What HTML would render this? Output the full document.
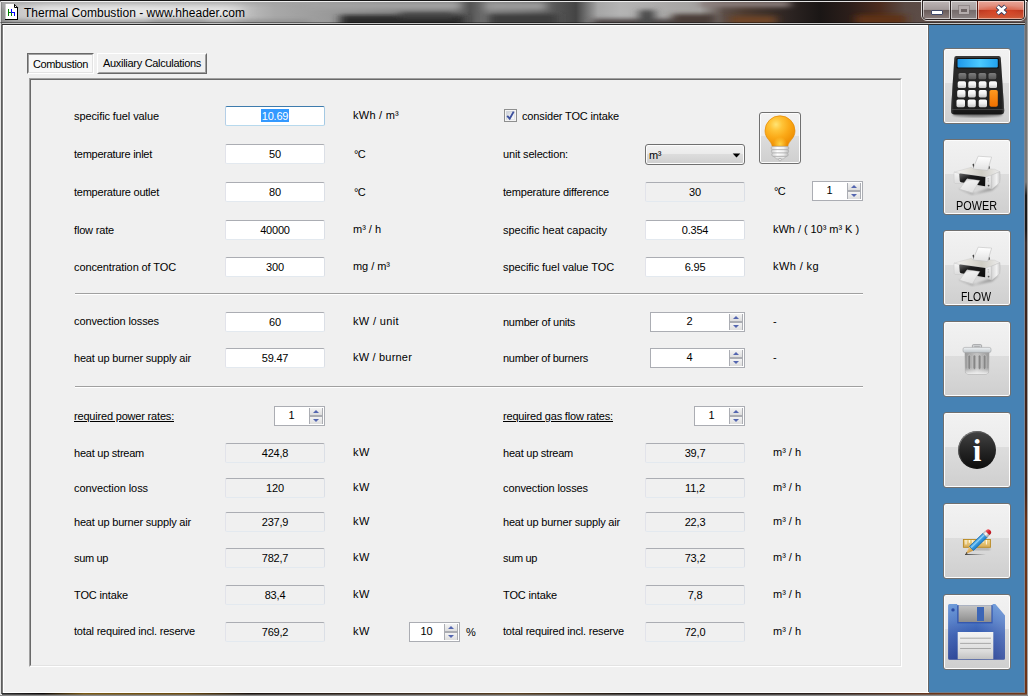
<!DOCTYPE html><html><head><meta charset="utf-8"><title>Thermal Combustion - www.hheader.com</title><style>
html,body{margin:0;padding:0}
body{width:1028px;height:696px;overflow:hidden;position:relative;background:#f0f0f0;font-family:"Liberation Sans",Arial,sans-serif;font-size:11px;color:#000}
div,span,i{box-sizing:border-box}
.a{position:absolute}
.t{position:absolute;white-space:nowrap;line-height:13px;height:13px;font-size:11px;color:#000}
#title{position:absolute;left:0;top:0;width:1028px;height:25px;overflow:hidden;background:#8a8a8a}
#client{position:absolute;left:3px;top:25px;width:1021px;height:667px;background:#f0f0f0}
#side{position:absolute;left:928px;top:25px;width:96px;height:667px;background:#4682b4}
.tb{position:absolute;background:#fff;border:1px solid #e3e9ef;border-top-color:#abadb3;border-left-color:#e2e3ea;border-right-color:#dbdfe6;border-radius:2px}
.tb.ro{background:#f0f0f0}
.tb.fo{border-color:#b7d9ed;border-top-color:#3d7bad;border-left-color:#b5cfe7;border-right-color:#a4c9e3}
.tv{position:absolute;left:0;right:0;top:3px;height:13px;line-height:13px;text-align:center;font-size:11px;white-space:nowrap;letter-spacing:-0.2px}
.sel{background:#3399ff;color:#fff;display:inline-block;height:13px;line-height:15px;margin-top:-1px;padding:0 1px;vertical-align:top}
.nud{position:absolute;background:#fff;border:1px solid #abadb3}
.nv{position:absolute;left:0;top:2px;height:13px;line-height:13px;text-align:center;font-size:11px}
.sp{position:absolute;right:1px;top:1px;width:14px;height:16px;border-left:1px solid #abadb3;border-right:1px solid #abadb3;background:#abadb3}
.su,.sd{position:absolute;left:0;width:12px;height:7px;background:linear-gradient(#f4f4f4,#dedede)}
.su{top:0}.sd{top:9px}
.su i,.sd i{position:absolute;left:3px;width:0;height:0;border-left:3px solid transparent;border-right:3px solid transparent}
.su i{top:2px;border-bottom:3px solid #5466b0}
.sd i{top:2px;border-top:3px solid #5466b0}
.btn{position:absolute;border:1px solid #707070;border-radius:3px;background:linear-gradient(#f2f2f2 0,#ebebeb 46%,#dddddd 46%,#cfcfcf 100%);box-shadow:inset 0 0 0 1px #fcfcfc}
.hr{position:absolute;height:2px;border-top:1px solid #a0a0a0;border-bottom:1px solid #fff}
</style></head><body>
<div id="title">
<svg class="a" style="left:0;top:0" width="1028" height="25" viewBox="0 0 1028 25">
<defs>
<filter id="bl" x="-10%" y="-100%" width="120%" height="300%"><feGaussianBlur stdDeviation="5 2.2"/></filter>
<filter id="bl2" x="-10%" y="-100%" width="120%" height="300%"><feGaussianBlur stdDeviation="9 4"/></filter>
<linearGradient id="tbase" x1="0" x2="1028" y1="0" y2="0" gradientUnits="userSpaceOnUse">
<stop offset="0.0000" stop-color="#a0a0a0"/><stop offset="0.0136" stop-color="#c8c8c8"/><stop offset="0.1265" stop-color="#d0d0d0"/><stop offset="0.2335" stop-color="#c0c0c0"/><stop offset="0.2675" stop-color="#a8a8a8"/><stop offset="0.3259" stop-color="#989898"/><stop offset="0.3891" stop-color="#848484"/><stop offset="0.4397" stop-color="#7c7c7c"/><stop offset="0.4572" stop-color="#545454"/><stop offset="0.4767" stop-color="#7c7c7c"/><stop offset="0.5058" stop-color="#707070"/><stop offset="0.5350" stop-color="#5c5c5c"/><stop offset="0.5603" stop-color="#444444"/><stop offset="0.5817" stop-color="#a6a6a6"/><stop offset="0.6031" stop-color="#b4b4b4"/><stop offset="0.6809" stop-color="#a4a2a0"/><stop offset="0.7043" stop-color="#5c4e48"/><stop offset="0.7247" stop-color="#4c3a30"/><stop offset="0.7685" stop-color="#2c2422"/><stop offset="0.7977" stop-color="#1a1615"/><stop offset="0.8268" stop-color="#2c1e1a"/><stop offset="0.8560" stop-color="#4c2c1e"/><stop offset="0.8804" stop-color="#5a4a44"/><stop offset="1.0000" stop-color="#6a5a58"/>
</linearGradient>
</defs>
<rect x="0" y="0" width="1028" height="25" fill="url(#tbase)"/>
<g filter="url(#bl)">
<rect x="340" y="15" width="125" height="12" fill="#2c2c2c"/>
<rect x="400" y="12" width="55" height="6" fill="#444"/>
<rect x="300" y="2" width="160" height="7" fill="#a2a2a2"/>
<rect x="488" y="14" width="70" height="12" fill="#3c3c3c"/>
<rect x="486" y="2" width="60" height="8" fill="#9a9a9a"/>
<rect x="592" y="19" width="120" height="8" fill="#484242"/>
<rect x="639" y="10" width="16" height="16" fill="#4a4848"/>
<rect x="672" y="14" width="44" height="10" fill="#4a3c38"/>
<rect x="150" y="18" width="56" height="8" fill="#909090"/>
<rect x="700" y="1" width="90" height="6" fill="#8a7e7c"/>
<rect x="730" y="16" width="46" height="9" fill="#6e4426"/>
<rect x="856" y="15" width="50" height="10" fill="#5e3018"/>
</g>
<g filter="url(#bl)"><rect x="-10" y="0" width="320" height="4" fill="#a2a2a2"/><rect x="-10" y="20" width="320" height="5" fill="#8e8e8e"/><rect x="-6" y="8" width="12" height="18" fill="#8a8a8a"/></g>
<g filter="url(#bl2)"><rect x="34" y="7" width="205" height="10" fill="#f2f2f2" opacity="0.9"/></g>
<rect x="0" y="0" width="1028" height="1" fill="#161616"/>
<rect x="1" y="1" width="1026" height="1" fill="#f4f4f4" opacity="0.92"/>
<rect x="0" y="2" width="1" height="23" fill="#fff" opacity="0.7"/>
<rect x="1" y="2" width="1" height="23" fill="#000" opacity="0.15"/>
<rect x="0" y="22" width="1028" height="1" fill="#000" opacity="0.35"/>
<rect x="2" y="23" width="1024" height="1" fill="#c4c4c4"/>
<rect x="2" y="24" width="1024" height="1" fill="#282828"/>
</svg>
<!-- app icon -->
<svg class="a" style="left:5px;top:4px" width="14" height="17" viewBox="0 0 14 17" shape-rendering="crispEdges">
<path d="M0.600 0H9.500L12 2.500V15H0.600Z" fill="#fff" shape-rendering="auto"/>
<rect x="12" y="3" width="1" height="13" fill="#000"/><rect x="0" y="15" width="13" height="1" fill="#000"/>
<path d="M9.500 0.300V3.500H12.500" fill="none" stroke="#000" stroke-width="1" shape-rendering="auto"/>
<path d="M9.300 0.200L12.800 3.700" fill="none" stroke="#000" stroke-width="0.900" shape-rendering="auto"/>
<rect x="3" y="5" width="1" height="7" fill="#008000"/><rect x="3" y="8" width="3" height="1" fill="#008000"/><rect x="6" y="9" width="1" height="3" fill="#008000"/>
<rect x="6" y="5" width="1" height="4" fill="#0000ff"/><rect x="6" y="8" width="4" height="1" fill="#0000ff"/><rect x="9" y="8" width="1" height="4" fill="#0000ff"/>
</svg>
<!-- caption buttons -->
<div class="a" style="left:921px;top:-1px;width:105px;height:22px;border:1px solid rgba(255,255,255,.8);border-radius:0 0 6px 6px"></div>
<div class="a" style="left:922px;top:0px;width:103px;height:20px;border:1px solid #2a2222;border-top:none;border-radius:0 0 5px 5px;overflow:hidden">
 <div class="a" style="left:0;top:1px;width:27px;height:18px;background:linear-gradient(#bdb5b5 0,#a39a9a 47%,#685a58 50%,#8c7e7c 100%);box-shadow:inset 0 0 0 1px rgba(255,255,255,.55)"></div>
 <div class="a" style="left:27px;top:1px;width:1px;height:18px;background:#2a2222"></div>
 <div class="a" style="left:28px;top:1px;width:26px;height:18px;background:linear-gradient(#bcb6b6 0,#a8a2a2 47%,#746a6a 50%,#8e8686 100%);box-shadow:inset 0 0 0 1px rgba(255,255,255,.55)"></div>
 <div class="a" style="left:54px;top:1px;width:1px;height:18px;background:#5a1810"></div>
 <div class="a" style="left:55px;top:1px;width:46px;height:18px;background:radial-gradient(ellipse 60% 40% at 50% 62%,rgba(226,78,44,.9),rgba(226,78,44,0) 100%),linear-gradient(#eaa698 0,#d97e6c 47%,#b4301a 50%,#d2623f 100%);box-shadow:inset 0 0 0 1px rgba(255,255,255,.45)"></div>
 <div class="a" style="left:8px;top:10px;width:12px;height:5px;background:#fff;border:1px solid #404868;border-radius:1px"></div>
 <div class="a" style="left:36px;top:6px;width:10px;height:8px;border:2px solid #b4acac;border-top-width:3px;background:#6e6464;box-shadow:0 0 0 1px rgba(120,110,110,.5)"></div>
 <svg class="a" style="left:72px;top:4px" width="13" height="12" viewBox="0 0 13 12"><path d="M2.300 2.200L10.700 9.800M10.700 2.200L2.300 9.800" stroke="#3a4060" stroke-width="4.600" fill="none"/><path d="M2.600 2.500L10.400 9.500M10.400 2.500L2.600 9.500" stroke="#fff" stroke-width="2.900" fill="none"/></svg>
</div>
</div>
<!-- window side/bottom frame -->
<div class="a" style="left:0;top:25px;width:1px;height:671px;background:#e4e4e4"></div>
<div class="a" style="left:1px;top:25px;width:1px;height:669px;background:#5e5e5e"></div>
<div class="a" style="left:2px;top:25px;width:1px;height:668px;background:#7c7c7c"></div>
<div id="client"></div>
<div class="a" style="left:3px;top:25px;width:925px;height:668px;border:1px solid #fff;border-right:none"></div>
<div class="a" style="left:927px;top:25px;width:1px;height:667px;background:#fff"></div>
<div class="a" style="left:928px;top:25px;width:1px;height:667px;background:#646464"></div>
<div class="a" style="left:929px;top:25px;width:95px;height:667px;background:#4682b4"></div>
<div class="a" style="left:1024px;top:25px;width:1px;height:668px;background:#77879a"></div>
<div class="a" style="left:1025px;top:20px;width:2px;height:675px;background:linear-gradient(#6e6e6e 0,#7a7a7a 24%,#1a1a1a 26%,#1a1818 31%,#3a2c2a 33%,#3c241c 42%,#42241a 70%,#683218 74%,#6e3418 100%)"></div>
<div class="a" style="left:1027px;top:2px;width:1px;height:694px;background:#a2a2a2"></div>
<div class="a" style="left:929px;top:692px;width:96px;height:1px;background:#6f7f92"></div>
<div class="a" style="left:2px;top:694px;width:1025px;height:1px;background:#868686"></div>
<div class="a" style="left:2px;top:694px;width:1025px;height:1px;opacity:.55;background:linear-gradient(90deg,#2c2c2c 0,#0c0808 4%,#7a5a14 8%,#6a4a10 18%,#1c1410 24%,#3a2c20 40%,#5a4020 50%,#181414 62%,#2a201c 80%,#70381a 92%,#70381a 100%)"></div>
<div class="a" style="left:2px;top:693px;width:1025px;height:1px;background:linear-gradient(90deg,#2c2c2c 0,#0c0808 4%,#7a5a14 8%,#6a4a10 18%,#1c1410 24%,#3a2c20 40%,#5a4020 50%,#181414 62%,#2a201c 80%,#70381a 92%,#70381a 100%)"></div>
<div class="a" style="left:0;top:695px;width:1028px;height:1px;background:#8c8c8c"></div>

<!-- tabs -->
<div class="a" style="left:27px;top:53px;width:67px;height:21px;border:1px solid #fff;border-top-color:#696969;border-left-color:#696969;background:#f8f8f8"></div>
<div class="a" style="left:28px;top:54px;width:65px;height:19px;border:1px solid #e3e3e3;border-top-color:#a0a0a0;border-left-color:#a0a0a0"></div>
<div class="a" style="left:97px;top:53px;width:110px;height:21px;border:1px solid #696969;border-top-color:#fff;border-left-color:#fff;background:#f0f0f0"></div>
<div class="a" style="left:98px;top:54px;width:108px;height:19px;border:1px solid #a0a0a0;border-top-color:#f0f0f0;border-left-color:#f0f0f0"></div>
<!-- panel -->
<div class="a" style="left:29px;top:78px;width:873px;height:589px;border:1px solid #fff;border-top-color:#a0a0a0;border-left-color:#a0a0a0"></div>
<div class="a" style="left:30px;top:79px;width:871px;height:587px;border:1px solid #e3e3e3;border-top-color:#696969;border-left-color:#696969"></div>
<div class="hr" style="left:75px;top:293px;width:788px"></div>
<div class="hr" style="left:75px;top:386px;width:788px"></div>
<!-- checkbox -->
<div class="a" style="left:504px;top:109px;width:13px;height:13px;border:1px solid #8e8f8f;background:#f4f4f4">
<div class="a" style="left:1px;top:1px;width:9px;height:9px;border:1px solid #d2d6dc;border-right-color:#e4e6ea;border-bottom-color:#e4e6ea;background:linear-gradient(135deg,#ccd0d8,#eef0f2 60%,#fafafa)"></div>
<svg class="a" style="left:0px;top:0px" width="11" height="11" viewBox="0 0 11 11"><path d="M2.200 5.900L4.700 8.700L8.700 1.600" stroke="#3c509e" stroke-width="1.900" fill="none" stroke-linejoin="miter"/></svg>
</div>
<!-- combo -->
<div class="btn" style="left:645px;top:144px;width:100px;height:21px"></div>
<svg class="a" style="left:732px;top:153px" width="9" height="5" viewBox="0 0 9 5"><path d="M0.700 0.400H8.300L4.500 4.600Z" fill="#000"/></svg>
<!-- bulb button -->
<div class="btn" style="left:759px;top:112px;width:42px;height:52px"></div>
<svg class="a" style="left:759px;top:112px" width="43" height="52" viewBox="759 112 43 52">
<defs><radialGradient id="bg1" cx="776" cy="124.500" r="22" gradientUnits="userSpaceOnUse"><stop offset="0" stop-color="#ffe474"/><stop offset="0.28" stop-color="#ffc438"/><stop offset="0.6" stop-color="#fbaa18"/><stop offset="1" stop-color="#ee8e02"/></radialGradient>
<radialGradient id="bg3" cx="780" cy="144" r="7" gradientUnits="userSpaceOnUse"><stop offset="0" stop-color="#ffd84a" stop-opacity="0.9"/><stop offset="1" stop-color="#ffd84a" stop-opacity="0"/></radialGradient>
<linearGradient id="bg2" x1="0" x2="1"><stop offset="0" stop-color="#d0d0d0"/><stop offset="0.35" stop-color="#ffffff"/><stop offset="0.7" stop-color="#f0f0f0"/><stop offset="1" stop-color="#bcbcbc"/></linearGradient></defs>
<path d="M772.200 146.300C771.600 140.800 765 138.600 765 130.800A15 15 0 0 1 795 130.800C795 138.600 788.400 140.800 787.800 146.300Z" fill="url(#bg1)" stroke="#e48a04" stroke-width="0.700"/>
<path d="M772.200 146.300C771.600 140.800 765 138.600 765 130.800A15 15 0 0 1 795 130.800C795 138.600 788.400 140.800 787.800 146.300Z" fill="url(#bg3)"/>
<rect x="771.200" y="146.400" width="17.600" height="3.300" rx="1.400" fill="url(#bg2)" stroke="#a6a6a6" stroke-width="0.600"/>
<rect x="771.400" y="149.700" width="17.200" height="3.300" rx="1.400" fill="url(#bg2)" stroke="#a6a6a6" stroke-width="0.600"/>
<rect x="771.800" y="153" width="16.400" height="3.300" rx="1.400" fill="url(#bg2)" stroke="#a6a6a6" stroke-width="0.600"/>
<path d="M773.400 156.400H786.600L783.200 158.900H776.800Z" fill="#e6e6e6" stroke="#a6a6a6" stroke-width="0.600"/>
<circle cx="780" cy="159.600" r="1.300" fill="#ededed" stroke="#9c9c9c" stroke-width="0.600"/>
</svg>

<div class="t" style="left:74px;top:110px;letter-spacing:-0.096px;">specific fuel value</div>
<div class="t" style="left:74px;top:148px;letter-spacing:-0.267px;">temperature inlet</div>
<div class="t" style="left:74px;top:186px;letter-spacing:-0.238px;">temperature outlet</div>
<div class="t" style="left:74px;top:224px;letter-spacing:-0.175px;">flow rate</div>
<div class="t" style="left:74px;top:261px;letter-spacing:-0.108px;">concentration of TOC</div>
<div class="t" style="left:74px;top:315px;letter-spacing:-0.108px;">convection losses</div>
<div class="t" style="left:74px;top:352px;letter-spacing:-0.188px;">heat up burner supply air</div>
<div class="t" style="left:74px;top:410px;letter-spacing:-0.188px;text-decoration:underline">required power rates:</div>
<div class="t" style="left:74px;top:447px;letter-spacing:-0.241px;">heat up stream</div>
<div class="t" style="left:74px;top:482px;letter-spacing:-0.081px;">convection loss</div>
<div class="t" style="left:74px;top:516px;letter-spacing:-0.188px;">heat up burner supply air</div>
<div class="t" style="left:74px;top:552px;letter-spacing:-0.346px;">sum up</div>
<div class="t" style="left:74px;top:589px;letter-spacing:-0.144px;">TOC intake</div>
<div class="t" style="left:74px;top:625px;letter-spacing:-0.199px;">total required incl. reserve</div>
<div class="t" style="left:353px;top:109px;letter-spacing:0.250px;">kWh / m³</div>
<div class="t" style="left:354px;top:148px;letter-spacing:-0.672px;">°C</div>
<div class="t" style="left:354px;top:186px;letter-spacing:-0.672px;">°C</div>
<div class="t" style="left:353px;top:223px;letter-spacing:-0.021px;">m³ / h</div>
<div class="t" style="left:353px;top:260px;letter-spacing:-0.040px;">mg / m³</div>
<div class="t" style="left:353px;top:315px;letter-spacing:0.356px;">kW / unit</div>
<div class="t" style="left:353px;top:351px;letter-spacing:0.195px;">kW / burner</div>
<div class="t" style="left:353px;top:446px;letter-spacing:0.555px;">kW</div>
<div class="t" style="left:353px;top:481px;letter-spacing:0.555px;">kW</div>
<div class="t" style="left:353px;top:515px;letter-spacing:0.555px;">kW</div>
<div class="t" style="left:353px;top:551px;letter-spacing:0.555px;">kW</div>
<div class="t" style="left:353px;top:588px;letter-spacing:0.555px;">kW</div>
<div class="t" style="left:353px;top:625px;letter-spacing:0.555px;">kW</div>
<div class="t" style="left:466px;top:626px;letter-spacing:-1.781px;">%</div>
<div class="t" style="left:522px;top:110px;letter-spacing:-0.151px;">consider TOC intake</div>
<div class="t" style="left:503px;top:148px;letter-spacing:-0.151px;">unit selection:</div>
<div class="t" style="left:503px;top:186px;letter-spacing:-0.204px;">temperature difference</div>
<div class="t" style="left:503px;top:224px;letter-spacing:-0.026px;">specific heat capacity</div>
<div class="t" style="left:503px;top:261px;letter-spacing:-0.074px;">specific fuel value TOC</div>
<div class="t" style="left:503px;top:316px;letter-spacing:-0.255px;">number of units</div>
<div class="t" style="left:503px;top:352px;letter-spacing:-0.288px;">number of burners</div>
<div class="t" style="left:503px;top:410px;letter-spacing:-0.181px;text-decoration:underline">required gas flow rates:</div>
<div class="t" style="left:503px;top:447px;letter-spacing:-0.241px;">heat up stream</div>
<div class="t" style="left:503px;top:482px;letter-spacing:-0.108px;">convection losses</div>
<div class="t" style="left:503px;top:516px;letter-spacing:-0.188px;">heat up burner supply air</div>
<div class="t" style="left:503px;top:552px;letter-spacing:-0.346px;">sum up</div>
<div class="t" style="left:503px;top:589px;letter-spacing:-0.144px;">TOC intake</div>
<div class="t" style="left:503px;top:625px;letter-spacing:-0.199px;">total required incl. reserve</div>
<div class="t" style="left:774px;top:185px;letter-spacing:-0.672px;">°C</div>
<div class="t" style="left:773px;top:223px;letter-spacing:-0.043px;">kWh / ( 10³ m³ K )</div>
<div class="t" style="left:773px;top:260px;letter-spacing:0.400px;">kWh / kg</div>
<div class="t" style="left:773px;top:315px;letter-spacing:0.328px;">-</div>
<div class="t" style="left:773px;top:351px;letter-spacing:0.328px;">-</div>
<div class="t" style="left:773px;top:446px;letter-spacing:-0.021px;">m³ / h</div>
<div class="t" style="left:773px;top:481px;letter-spacing:-0.021px;">m³ / h</div>
<div class="t" style="left:773px;top:515px;letter-spacing:-0.021px;">m³ / h</div>
<div class="t" style="left:773px;top:551px;letter-spacing:-0.021px;">m³ / h</div>
<div class="t" style="left:773px;top:588px;letter-spacing:-0.021px;">m³ / h</div>
<div class="t" style="left:773px;top:625px;letter-spacing:-0.021px;">m³ / h</div>
<div class="t" style="left:24px;top:6px;font-size:12px;line-height:14px;height:14px;letter-spacing:0.025px;">Thermal Combustion - www.hheader.com</div>
<div class="t" style="left:33px;top:58px;letter-spacing:-0.370px;">Combustion</div>
<div class="t" style="left:103px;top:57px;letter-spacing:-0.298px;">Auxiliary Calculations</div>
<div class="t" style="left:649px;top:149px;letter-spacing:-0.414px;">m³</div>
<div class="t" style="left:956px;top:199px;font-size:12px;line-height:14px;height:14px;transform:scaleX(0.9042);transform-origin:0 0;z-index:5">POWER</div>
<div class="t" style="left:961px;top:290px;font-size:12px;line-height:14px;height:14px;transform:scaleX(0.8653);transform-origin:0 0;z-index:5">FLOW</div>
<div class="tb fo" style="left:225px;top:106px;width:100px;height:20px"><div class="tv"><span class="sel">10.69</span></div></div>
<div class="tb" style="left:225px;top:144px;width:100px;height:20px"><div class="tv">50</div></div>
<div class="tb" style="left:225px;top:182px;width:100px;height:20px"><div class="tv">80</div></div>
<div class="tb" style="left:225px;top:220px;width:100px;height:20px"><div class="tv">40000</div></div>
<div class="tb" style="left:225px;top:257px;width:100px;height:20px"><div class="tv">300</div></div>
<div class="tb" style="left:225px;top:312px;width:100px;height:20px"><div class="tv">60</div></div>
<div class="tb" style="left:225px;top:348px;width:100px;height:20px"><div class="tv">59.47</div></div>
<div class="tb ro" style="left:225px;top:443px;width:100px;height:20px"><div class="tv">424,8</div></div>
<div class="tb ro" style="left:225px;top:478px;width:100px;height:20px"><div class="tv">120</div></div>
<div class="tb ro" style="left:225px;top:512px;width:100px;height:20px"><div class="tv">237,9</div></div>
<div class="tb ro" style="left:225px;top:548px;width:100px;height:20px"><div class="tv">782,7</div></div>
<div class="tb ro" style="left:225px;top:585px;width:100px;height:20px"><div class="tv">83,4</div></div>
<div class="tb ro" style="left:225px;top:622px;width:100px;height:20px"><div class="tv">769,2</div></div>
<div class="tb ro" style="left:645px;top:182px;width:100px;height:20px"><div class="tv">30</div></div>
<div class="tb" style="left:645px;top:220px;width:100px;height:20px"><div class="tv">0.354</div></div>
<div class="tb" style="left:645px;top:257px;width:100px;height:20px"><div class="tv">6.95</div></div>
<div class="tb ro" style="left:645px;top:443px;width:100px;height:20px"><div class="tv">39,7</div></div>
<div class="tb ro" style="left:645px;top:478px;width:100px;height:20px"><div class="tv">11,2</div></div>
<div class="tb ro" style="left:645px;top:512px;width:100px;height:20px"><div class="tv">22,3</div></div>
<div class="tb ro" style="left:645px;top:548px;width:100px;height:20px"><div class="tv">73,2</div></div>
<div class="tb ro" style="left:645px;top:585px;width:100px;height:20px"><div class="tv">7,8</div></div>
<div class="tb ro" style="left:645px;top:622px;width:100px;height:20px"><div class="tv">72,0</div></div>
<div class="nud" style="left:812px;top:181px;width:51px;height:20px"><div class="nv" style="width:33px">1</div><div class="sp"><div class="su"><i></i></div><div class="sd"><i></i></div></div></div>
<div class="nud" style="left:650px;top:312px;width:95px;height:20px"><div class="nv" style="width:77px">2</div><div class="sp"><div class="su"><i></i></div><div class="sd"><i></i></div></div></div>
<div class="nud" style="left:650px;top:348px;width:95px;height:20px"><div class="nv" style="width:77px">4</div><div class="sp"><div class="su"><i></i></div><div class="sd"><i></i></div></div></div>
<div class="nud" style="left:274px;top:406px;width:51px;height:20px"><div class="nv" style="width:33px">1</div><div class="sp"><div class="su"><i></i></div><div class="sd"><i></i></div></div></div>
<div class="nud" style="left:694px;top:406px;width:51px;height:20px"><div class="nv" style="width:33px">1</div><div class="sp"><div class="su"><i></i></div><div class="sd"><i></i></div></div></div>
<div class="nud" style="left:409px;top:622px;width:51px;height:20px"><div class="nv" style="width:33px">10</div><div class="sp"><div class="su"><i></i></div><div class="sd"><i></i></div></div></div>
<div class="btn" style="left:943px;top:48px;width:68px;height:76px"></div>
<div class="btn" style="left:943px;top:139px;width:68px;height:76px"></div>
<div class="btn" style="left:943px;top:230px;width:68px;height:76px"></div>
<div class="btn" style="left:943px;top:321px;width:68px;height:76px"></div>
<div class="btn" style="left:943px;top:412px;width:68px;height:76px"></div>
<div class="btn" style="left:943px;top:503px;width:68px;height:76px"></div>
<div class="btn" style="left:943px;top:594px;width:68px;height:76px"></div>

<!-- calculator -->
<svg class="a" style="left:943px;top:48px" width="68" height="76" viewBox="943 48 68 76">
<defs>
<linearGradient id="cb" x1="0" y1="0" x2="0" y2="1"><stop offset="0" stop-color="#3a3a3a"/><stop offset="0.15" stop-color="#2a2a2a"/><stop offset="0.9" stop-color="#1e1e1e"/><stop offset="1" stop-color="#141414"/></linearGradient>
<linearGradient id="cbs" x1="0" y1="0" x2="1" y2="0"><stop offset="0" stop-color="#5a5a5a"/><stop offset="0.06" stop-color="#2a2a2a" stop-opacity="0"/><stop offset="0.94" stop-color="#2a2a2a" stop-opacity="0"/><stop offset="1" stop-color="#5a5a5a"/></linearGradient>
<linearGradient id="cs" x1="0" y1="0" x2="1" y2="0"><stop offset="0" stop-color="#1e98ea"/><stop offset="0.55" stop-color="#4ccaff"/><stop offset="1" stop-color="#22a2ee"/></linearGradient>
<linearGradient id="kw" x1="0" y1="0" x2="0" y2="1"><stop offset="0" stop-color="#ffffff"/><stop offset="0.5" stop-color="#f0f0f0"/><stop offset="1" stop-color="#c4c4c4"/></linearGradient>
<linearGradient id="kg" x1="0" y1="0" x2="0" y2="1"><stop offset="0" stop-color="#7c7c7c"/><stop offset="1" stop-color="#565656"/></linearGradient>
<linearGradient id="ko" x1="0" y1="0" x2="0" y2="1"><stop offset="0" stop-color="#ff9a20"/><stop offset="1" stop-color="#f07000"/></linearGradient>
<filter id="cbl"><feGaussianBlur stdDeviation="1.2"/></filter>
</defs>
<ellipse cx="977.500" cy="114.500" rx="25" ry="2.500" fill="#000" opacity="0.45" filter="url(#cbl)"/>
<path d="M954.300 58Q954.300 55.900 956.400 55.900H998.600Q1000.700 55.900 1000.800 58L1004.200 110.500Q1004.400 114.600 1000.400 114.600H954.800Q950.800 114.600 951 110.500Z" fill="url(#cb)"/>
<path d="M954.300 58Q954.300 55.900 956.400 55.900H998.600Q1000.700 55.900 1000.800 58L1004.200 110.500Q1004.400 114.600 1000.400 114.600H954.800Q950.800 114.600 951 110.500Z" fill="url(#cbs)" opacity="0.8"/>
<path d="M951.300 109.500H1003.900" stroke="#4a4a4a" stroke-width="0.800" fill="none"/>
<rect x="956.500" y="58" width="42.300" height="10.400" rx="1.200" fill="#101010"/>
<rect x="957.500" y="59" width="40.300" height="8.400" rx="0.800" fill="url(#cs)"/>
<g fill="url(#kg)">
<rect x="958.500" y="73" width="7.800" height="6.300" rx="1.600"/><rect x="968.500" y="73" width="7.700" height="6.300" rx="1.600"/><rect x="978.500" y="73" width="7.700" height="6.300" rx="1.600"/><rect x="988.500" y="73" width="7.800" height="6.300" rx="1.600"/>
</g>
<g fill="url(#kw)">
<rect x="957.700" y="81.300" width="8.300" height="6.800" rx="1.600"/><rect x="968.300" y="81.300" width="7.800" height="6.800" rx="1.600"/><rect x="978.700" y="81.300" width="7.800" height="6.800" rx="1.600"/><rect x="989" y="81.300" width="8" height="6.800" rx="1.600"/>
<rect x="957.200" y="90.100" width="8.300" height="7.300" rx="1.600"/><rect x="968" y="90.100" width="7.800" height="7.300" rx="1.600"/><rect x="978.700" y="90.100" width="8.100" height="7.300" rx="1.600"/>
<rect x="956.500" y="99.400" width="8.500" height="7.800" rx="1.600"/><rect x="967.700" y="99.400" width="8.100" height="7.800" rx="1.600"/><rect x="978.700" y="99.400" width="8.300" height="7.800" rx="1.600"/>
</g>
<rect x="989.500" y="89.900" width="8.300" height="16.800" rx="1.800" fill="url(#ko)"/>
</svg>
<!-- printers -->
<svg class="a" style="left:943px;top:139px" width="68" height="167" viewBox="943 139 68 167">
<defs>
<linearGradient id="pp" x1="0" y1="0" x2="0" y2="1"><stop offset="0" stop-color="#ffffff"/><stop offset="1" stop-color="#e2e2e2"/></linearGradient>
<linearGradient id="pt" x1="0" y1="0" x2="1" y2="0"><stop offset="0" stop-color="#f6f6f6"/><stop offset="0.3" stop-color="#e4e2dc"/><stop offset="0.6" stop-color="#cfcdc4"/><stop offset="1" stop-color="#ececec"/></linearGradient>
<linearGradient id="ps" x1="0" y1="0" x2="1" y2="1"><stop offset="0" stop-color="#6a6a6a"/><stop offset="0.35" stop-color="#1c1c1c"/><stop offset="1" stop-color="#0c0c0c"/></linearGradient>
<linearGradient id="pf" x1="0" y1="0" x2="0" y2="1"><stop offset="0" stop-color="#f6f6f6"/><stop offset="1" stop-color="#cfcfcf"/></linearGradient>
<linearGradient id="pr" x1="0" y1="0" x2="1" y2="0"><stop offset="0" stop-color="#d2d2d2"/><stop offset="0.6" stop-color="#f2f2f2"/><stop offset="1" stop-color="#c8c8c8"/></linearGradient>
<linearGradient id="po" x1="0" y1="0" x2="0.300" y2="1"><stop offset="0" stop-color="#b8b8b8"/><stop offset="0.3" stop-color="#efefef"/><stop offset="1" stop-color="#e0e0e0"/></linearGradient>
<filter id="pbl"><feGaussianBlur stdDeviation="1.3"/></filter>
<g id="prn">
<path d="M957 188L975 193.500L999 184L992 190.500L972 194.500Z" fill="#000" opacity="0.28" filter="url(#pbl)"/>
<!-- back paper -->
<path d="M972.500 164.200L973.700 163.600L975 168.400L973.400 168.600Z" fill="#3a3a3a"/>
<path d="M988.200 166.300L989.400 165.700L990 169L988.600 169.400Z" fill="#3a3a3a"/>
<path d="M978.200 156.200L991.600 157.100L987.600 170.600L972.700 169.200Z" fill="url(#pp)" stroke="#b4b4b4" stroke-width="0.500"/>
<!-- top face -->
<path d="M954 172.200L971.600 167.200L973 169L987.500 170.500L989 168.800L994.500 169.200L1000 171.800L991.200 175.400L985.400 177.200L959 173.500Z" fill="url(#pt)" stroke="#c6c6c6" stroke-width="0.400"/>
<!-- front-left face -->
<path d="M954 172.200L959.200 173.400L985.400 177L991.200 175.200L991.800 189.200L985 186.800L962 183.500L955 183.500Q954.200 183 954.200 182Z" fill="url(#pf)" stroke="#c2c2c2" stroke-width="0.400"/>
<!-- right side face -->
<path d="M991.200 175.200L1000 171.700Q1000.500 177 999.900 182.500L991.900 189.300Z" fill="url(#pr)" stroke="#bcbcbc" stroke-width="0.400"/>
<!-- slot -->
<path d="M959.200 174L960.200 173.500L985.400 177L985.100 186.200L961 182.300Q960 182 959.800 181Z" fill="url(#ps)"/>
<!-- buttons -->
<circle cx="988.300" cy="178.800" r="0.800" fill="#bdbdbd"/><circle cx="988.300" cy="181" r="0.800" fill="#bdbdbd"/><circle cx="988.600" cy="185.600" r="0.900" fill="#555"/>
<!-- out paper -->
<path d="M967 178.800L979.700 180.600L972.200 193.200L959.400 189.500Z" fill="url(#po)" stroke="#c0c0c0" stroke-width="0.400"/>
<path d="M959.400 189.500L972.200 193.200L972.500 192.500L959.800 188.900Z" fill="#bcbcbc" opacity="0.7"/>
</g>
</defs>
<use href="#prn"/>
<use href="#prn" transform="translate(0,91)"/>
</svg>
<!-- trash -->
<svg class="a" style="left:943px;top:321px" width="68" height="76" viewBox="943 321 68 76">
<defs>
<linearGradient id="tb" x1="0" y1="0" x2="1" y2="0"><stop offset="0" stop-color="#9a9a9a"/><stop offset="0.5" stop-color="#c4c4c4"/><stop offset="1" stop-color="#9a9a9a"/></linearGradient>
<linearGradient id="tl" x1="0" y1="0" x2="0" y2="1"><stop offset="0" stop-color="#eef2f4"/><stop offset="1" stop-color="#c0c6ca"/></linearGradient>
<linearGradient id="tg" x1="0" y1="0" x2="0" y2="1"><stop offset="0.7" stop-color="#fff" stop-opacity="0"/><stop offset="1" stop-color="#fff" stop-opacity="0.8"/></linearGradient>
</defs>
<path d="M972.400 347.600V345.600Q972.400 344.600 973.400 344.600H980.600Q981.600 344.600 981.600 345.600V347.600" fill="#d0d2d4" stroke="#9a9c9e" stroke-width="0.800"/>
<rect x="974.200" y="346" width="5.600" height="1.200" fill="#b0b2b4"/>
<path d="M965 352.500H989L988.600 371.500Q988.500 374 986 374H968Q965.500 374 965.400 371.500Z" fill="url(#tb)" stroke="#9c9c9c" stroke-width="0.600"/>
<path d="M965 352.500H989L988.600 371.500Q988.500 374 986 374H968Q965.500 374 965.400 371.500Z" fill="url(#tg)"/>
<rect x="963" y="347.400" width="28" height="5.200" rx="1.800" fill="url(#tl)" stroke="#a2a4a6" stroke-width="0.600"/>
<g fill="#868686" stroke="#cecece" stroke-width="0.600">
<rect x="967.900" y="355" width="2.800" height="14.400" rx="1.400"/><rect x="973.000" y="355" width="2.800" height="14.400" rx="1.400"/><rect x="978.200" y="355" width="2.800" height="14.400" rx="1.400"/><rect x="983.200" y="355" width="2.800" height="14.400" rx="1.400"/>
</g>
</svg>
<!-- info -->
<svg class="a" style="left:943px;top:412px" width="68" height="76" viewBox="943 412 68 76">
<defs>
<linearGradient id="ic" x1="0" y1="0" x2="0" y2="1"><stop offset="0" stop-color="#444"/><stop offset="0.5" stop-color="#262626"/><stop offset="1" stop-color="#0c0c0c"/></linearGradient>
<linearGradient id="ir" x1="0" y1="0" x2="1" y2="1"><stop offset="0" stop-color="#d8d8d8"/><stop offset="0.5" stop-color="#555" stop-opacity="0.2"/><stop offset="1" stop-color="#222" stop-opacity="0"/></linearGradient>
</defs>
<circle cx="977" cy="450" r="19" fill="url(#ic)"/>
<circle cx="977" cy="450" r="18.300" fill="none" stroke="url(#ir)" stroke-width="0.800"/>
<text x="977" y="461.200" text-anchor="middle" font-family="'Liberation Serif',serif" font-weight="bold" font-size="31" fill="#fff">i</text>
</svg>
<!-- ruler + pencil -->
<svg class="a" style="left:943px;top:503px" width="68" height="76" viewBox="943 503 68 76">
<defs>
<linearGradient id="ru" x1="0" y1="0" x2="0" y2="1"><stop offset="0" stop-color="#f4d88c"/><stop offset="1" stop-color="#d6ac58"/></linearGradient>
<linearGradient id="pb" x1="0" y1="0" x2="0" y2="1"><stop offset="0" stop-color="#2c8cd4"/><stop offset="0.35" stop-color="#8ed2fa"/><stop offset="0.55" stop-color="#3a9ce0"/><stop offset="1" stop-color="#1c7cc8"/></linearGradient>
<linearGradient id="pe" x1="0" y1="0" x2="0" y2="1"><stop offset="0" stop-color="#f26a70"/><stop offset="0.5" stop-color="#d8222e"/><stop offset="1" stop-color="#b01420"/></linearGradient>
<linearGradient id="pm" x1="0" y1="0" x2="0" y2="1"><stop offset="0" stop-color="#b8b8b8"/><stop offset="0.4" stop-color="#ffffff"/><stop offset="1" stop-color="#9a9a9a"/></linearGradient>
<linearGradient id="pw" x1="0" y1="0" x2="0" y2="1"><stop offset="0" stop-color="#f2cc80"/><stop offset="1" stop-color="#c89038"/></linearGradient>
<linearGradient id="sh" x1="0" y1="0" x2="1" y2="0"><stop offset="0" stop-color="#303030"/><stop offset="1" stop-color="#303030" stop-opacity="0"/></linearGradient>
<filter id="rbl"><feGaussianBlur stdDeviation="1"/></filter>
</defs>
<rect x="972" y="548" width="18" height="2" fill="#000" opacity="0.25" filter="url(#rbl)"/>
<rect x="963.400" y="539.500" width="27" height="7.800" fill="url(#ru)" stroke="#b88820" stroke-width="0.900"/>
<path d="M966 540V544.500M969.400 540V542.800M972.800 540V544.500M976.200 540V542.800M979.600 540V544.500M983 540V542.800M986.400 540V544.500" stroke="#fff" stroke-width="1" opacity="0.9" fill="none"/>
<rect x="965" y="554" width="21" height="0.900" fill="url(#sh)"/>
<g transform="translate(965.500,554.200) rotate(-44)">
<path d="M0 0L8.300 -2.850V2.850Z" fill="url(#pw)"/>
<path d="M0 0L2.200 -0.820V0.820Z" fill="#3a3a3a"/>
<rect x="8.300" y="-2.900" width="18.900" height="5.800" fill="url(#pb)" stroke="#1a6cb0" stroke-width="0.700"/>
<rect x="27.200" y="-2.900" width="3.300" height="5.800" fill="url(#pm)" stroke="#9a9a9a" stroke-width="0.400"/>
<path d="M30.500 -2.900H31.800Q34.300 -2.900 34.300 0Q34.300 2.900 31.800 2.900H30.500Z" fill="url(#pe)"/>
</g>
</svg>
<!-- floppy -->
<svg class="a" style="left:943px;top:594px" width="68" height="76" viewBox="943 594 68 76">
<defs>
<linearGradient id="fb" x1="0" y1="0" x2="0" y2="1"><stop offset="0" stop-color="#6292d6"/><stop offset="0.3" stop-color="#4a76c4"/><stop offset="0.55" stop-color="#3358ae"/><stop offset="1" stop-color="#1f3a92"/></linearGradient>
<linearGradient id="fh" x1="0" y1="0" x2="1" y2="0"><stop offset="0" stop-color="#fff" stop-opacity="0.100"/><stop offset="0.5" stop-color="#fff" stop-opacity="0"/><stop offset="1" stop-color="#fff" stop-opacity="0.180"/></linearGradient>
<linearGradient id="fm" x1="0" y1="0" x2="0" y2="1"><stop offset="0" stop-color="#c6c6c6"/><stop offset="1" stop-color="#8e8e8e"/></linearGradient>
<linearGradient id="fl" x1="0" y1="0" x2="0" y2="1"><stop offset="0" stop-color="#f4f4f4"/><stop offset="0.7" stop-color="#dcdcdc"/><stop offset="1" stop-color="#c2c2c2"/></linearGradient>
</defs>
<path d="M949.600 603.900H957.200V605.200H992.600V603.900H995.300L1005 615.600V658.200Q1005 659.700 1003.500 659.700H949.600Q948.100 659.700 948.100 658.200V605.400Q948.100 603.900 949.600 603.900Z" fill="url(#fb)"/>
<path d="M949.600 603.900H957.200V605.200H992.600V603.900H995.300L1005 615.600V658.200Q1005 659.700 1003.500 659.700H949.600Q948.100 659.700 948.100 658.200V605.400Q948.100 603.900 949.600 603.900Z" fill="url(#fh)"/>
<rect x="957.200" y="605.200" width="35.400" height="18.200" fill="#3558ae"/>
<rect x="958.600" y="605.200" width="32.800" height="16.800" fill="url(#fm)"/>
<rect x="977" y="607" width="7" height="14" fill="#3c66b6"/>
<circle cx="953" cy="609.900" r="1.700" fill="#2a4aa2"/>
<rect x="957.700" y="632" width="35.600" height="27.200" fill="url(#fl)"/>
<path d="M960.100 638.200H990.900M960.100 643.400H990.900M960.100 648.500H990.900" stroke="#a2a2a2" stroke-width="0.900" fill="none"/>
</svg>

</body></html>
